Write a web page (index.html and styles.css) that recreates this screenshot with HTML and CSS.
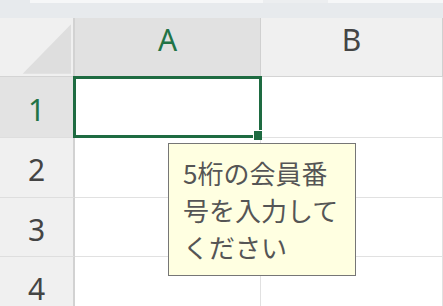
FILE: index.html
```html
<!DOCTYPE html>
<html lang="ja">
<head>
<meta charset="utf-8">
<link rel="stylesheet" href="styles.css">
</head>
<body>
<div class="topstrip">
  <div class="bar bar-a"></div>
  <div class="bar bar-gap"></div>
  <div class="bar bar-b"></div>
</div>
<div class="sheet">
  <div class="corner">
    <svg width="74" height="58" viewBox="0 0 74 58"><polygon points="23,56 72,6 72,56" fill="#dedede"/></svg>
  </div>
  <div class="colhead sel">A</div>
  <div class="colhead">B</div>

  <div class="rowhead sel">1</div>
  <div class="cell"></div>
  <div class="cell"></div>

  <div class="rowhead">2</div>
  <div class="cell"></div>
  <div class="cell"></div>

  <div class="rowhead">3</div>
  <div class="cell"></div>
  <div class="cell"></div>

  <div class="rowhead">4</div>
  <div class="cell"></div>
  <div class="cell"></div>

  <div class="selection"><span class="handle"></span></div>
  <div class="tooltip">5桁の会員番<br>号を入力して<br>ください</div>
</div>
</body>
</html>
```

FILE: styles.css
```css
html, body {
  margin: 0;
  padding: 0;
  background: #ffffff;
  overflow: hidden;
}
body {
  width: 443px;
  height: 306px;
  font-family: "Noto Sans", "Open Sans", "Noto Sans CJK JP", sans-serif;
}
.topstrip {
  height: 18px;
  background: #e7eaed;
  display: flex;
  align-items: flex-start;
}
.bar {
  height: 3px;
}
.bar-a {
  margin-left: 30px;
  width: 233px;
  background: #f6f7f8;
}
.bar-gap {
  width: 65px;
  background: #eceef0;
}
.bar-b {
  flex: 1;
  background: #f6f7f8;
}
.sheet {
  position: relative;
  display: grid;
  grid-template-columns: 75px 186px 1fr;
  grid-template-rows: 59px 61px 60px 59px 60px;
}
.corner {
  background: #f0f0f0;
  border-right: 2px solid #d2d2d2;
  border-bottom: 1px solid #d4d4d4;
  display: flex;
  align-items: flex-end;
}
.corner svg {
  display: block;
}
.colhead {
  display: flex;
  justify-content: center;
  align-items: center;
  padding-bottom: 16px;
  box-sizing: border-box;
  font-size: 30px;
  color: #444444;
  background: #f0f0f0;
  border-bottom: 1px solid #d4d4d4;
  border-right: 1px solid #d0d0d0;
}
.colhead.sel {
  background: #e1e1e1;
  color: #217346;
}
.rowhead {
  display: flex;
  justify-content: center;
  align-items: center;
  padding-top: 4px;
  box-sizing: border-box;
  font-size: 30px;
  color: #444444;
  background: #f0f0f0;
  border-right: 2px solid #d2d2d2;
  border-bottom: 1px solid #dedede;
}
.rowhead.sel {
  background: #e3e3e3;
  color: #217346;
}
.cell {
  background: #ffffff;
  border-right: 1px solid #e1e1e1;
  border-bottom: 1px solid #e1e1e1;
}
.selection {
  position: absolute;
  left: 73px;
  top: 58px;
  width: 189px;
  height: 62px;
  box-sizing: border-box;
  border: 3px solid #1e6b41;
}
.handle {
  position: absolute;
  right: -3px;
  bottom: -5px;
  width: 8px;
  height: 9px;
  background: #1e6b41;
  border-left: 1px solid #ffffff;
  border-top: 1px solid #ffffff;
}
.tooltip {
  position: absolute;
  left: 168px;
  top: 125px;
  width: 188px;
  height: 133px;
  box-sizing: border-box;
  padding: 10px 0 0 14px;
  background: #ffffe1;
  border: 1px solid #767676;
  font-family: "Noto Sans CJK JP", "Noto Sans", sans-serif;
  font-size: 26px;
  line-height: 37px;
  color: #555555;
  white-space: nowrap;
}
```
